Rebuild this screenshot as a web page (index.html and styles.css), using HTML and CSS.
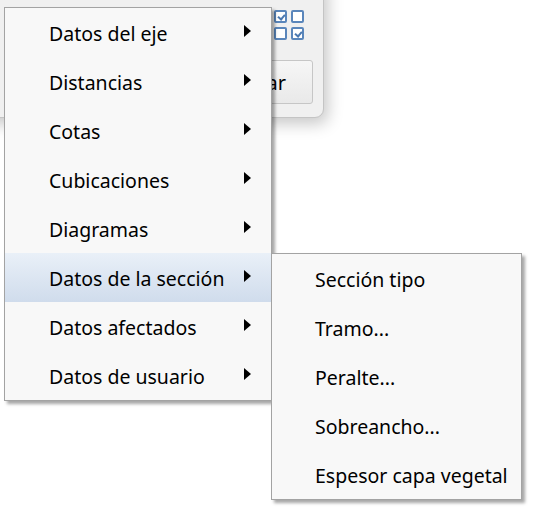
FILE: index.html
```html
<!DOCTYPE html>
<html lang="es">

<head>
    <meta charset="UTF-8">
    <meta name="viewport" content="width=device-width, initial-scale=1.0">
    <title>Menú de datos</title>

    <link rel="stylesheet" href="styles.css">

</head>

<body>
    <div class="dialog">
        <div class="checks">
            <span class="chk on"></span><span class="chk"></span>
            <span class="chk"></span><span class="chk on"></span>
        </div>
        <button class="btn">Cancelar</button>
    </div>

    <ul class="menu main-menu">
        <li class="item sub">Datos del eje</li>
        <li class="item sub">Distancias</li>
        <li class="item sub">Cotas</li>
        <li class="item sub">Cubicaciones</li>
        <li class="item sub">Diagramas</li>
        <li class="item sub active">Datos de la sección</li>
        <li class="item sub">Datos afectados</li>
        <li class="item sub">Datos de usuario</li>
    </ul>

    <ul class="menu sub-menu">
        <li class="item">Sección tipo</li>
        <li class="item">Tramo...</li>
        <li class="item">Peralte...</li>
        <li class="item">Sobreancho...</li>
        <li class="item">Espesor capa vegetal</li>
    </ul>
</body>

</html>
```

FILE: styles.css
```css
* {
    font-family: 'Noto Sans', 'Open Sans', sans-serif;
    box-sizing: border-box;
    margin: 0px;
    padding: 0px;
}

body {
    position: relative;
    width: 534px;
    height: 511px;
    overflow: hidden;
    background-color: #fff;
}

/* window behind the popup */
.dialog {
    position: absolute;
    left: -20px;
    top: -20px;
    width: 344px;
    height: 138px;
    background-color: #f0f0f0;
    border: 1px solid #c4c4c4;
    border-radius: 0 0 9px 0;
    box-shadow: 4px 6px 16px rgba(0, 0, 0, 0.22);
}

.checks {
    position: absolute;
    left: 293px;
    top: 29px;
    display: grid;
    grid-template-columns: 13px 13px;
    gap: 4px;
}

.chk {
    width: 13px;
    height: 13px;
    border: 2px solid #5a86bb;
    border-radius: 2px;
    background-color: #fff;
    position: relative;
}

.chk.on::after {
    content: "";
    position: absolute;
    left: 3px;
    top: 1px;
    width: 3px;
    height: 5px;
    border: solid #4a78b0;
    border-width: 0 2px 2px 0;
    transform: rotate(40deg);
}

.btn {
    position: absolute;
    left: 214px;
    top: 79px;
    width: 118px;
    height: 44px;
    border: 1px solid #c6c6c6;
    border-radius: 3px;
    background: linear-gradient(#f6f6f6, #e9e9e9);
    font-size: 20px;
    color: #000;
    text-align: right;
    padding-right: 26px;
}

/* popup menus */
.menu {
    position: absolute;
    list-style: none;
    background-color: #f8f8f8;
    border: 1px solid #a3a3a3;
    box-shadow: 3px 3px 3px rgba(0, 0, 0, 0.35);
}

.main-menu {
    left: 4px;
    top: 7px;
    width: 268px;
}

.sub-menu {
    left: 271px;
    top: 253px;
    width: 251px;
}

.item {
    position: relative;
    height: 49px;
    padding-top: 2px;
    line-height: 47px;
    font-size: 19.5px;
    color: #000;
    white-space: nowrap;
}

.main-menu .item {
    padding-left: 44px;
}

.sub-menu .item {
    padding-left: 43px;
}

.item.sub::after {
    content: "";
    position: absolute;
    left: 239px;
    top: 17px;
    border-style: solid;
    border-width: 6.5px 0 6.5px 7px;
    border-color: transparent transparent transparent #000;
}

.item.active {
    background: linear-gradient(#e9f0f8, #d0dcec);
}
```
